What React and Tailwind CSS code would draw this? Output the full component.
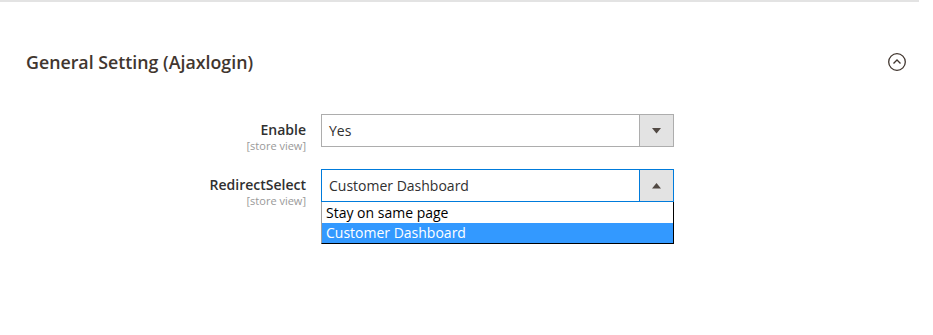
export default function App() {
  const font = { fontFamily: '"Open Sans", "Liberation Sans", sans-serif' };
  return (
    <div className="w-[933px] h-[335px] bg-white text-[#303030]" style={font}>
      <div className="w-[919px] h-[2px] bg-[#e3e3e3]" />
      <div className="flex items-center justify-between w-[919px] pl-[26px] pr-[12px] pt-[48px]">
        <h2 className="text-[17.8px] font-semibold text-[#41362f] leading-[24px]">General Setting (Ajaxlogin)</h2>
        <svg width="20" height="20" viewBox="0 0 20 20" className="mr-[0px]">
          <circle cx="10" cy="10" r="8.3" fill="none" stroke="#41362f" strokeWidth="1.3" />
          <path d="M6.5 11.5 L10 8 L13.5 11.5" fill="none" stroke="#41362f" strokeWidth="1.3" />
        </svg>
      </div>
      <div className="flex flex-col gap-[17px] mt-[40px]">
        <div className="flex">
          <div className="w-[306px] flex flex-col items-end pt-[7px]">
            <span className="text-[14px] font-semibold leading-[18px] text-[#303030]">Enable</span>
            <span className="text-[11px] leading-[13px] text-[#999999]">[store view]</span>
          </div>
          <div className="ml-[15px] w-[353px] h-[33px] flex border border-[#adadad]">
            <div className="flex-1 flex items-center pl-[7px] text-[14px]">Yes</div>
            <div className="w-[34px] bg-[#e3e3e3] border-l border-[#adadad] flex items-center justify-center">
              <svg width="9" height="6" viewBox="0 0 9 6"><path d="M0 0 H9 L4.5 5.5 Z" fill="#514943" /></svg>
            </div>
          </div>
        </div>
        <div className="flex">
          <div className="w-[306px] flex flex-col items-end pt-[7px]">
            <span className="text-[14px] font-semibold leading-[18px] text-[#303030]">RedirectSelect</span>
            <span className="text-[11px] leading-[13px] text-[#999999]">[store view]</span>
          </div>
          <div className="ml-[15px] w-[353px] relative">
            <div className="h-[33px] flex border border-[#007bdb]">
              <div className="flex-1 flex items-center pl-[7px] text-[14px]">Customer Dashboard</div>
              <div className="w-[34px] bg-[#e3e3e3] border-l border-[#007bdb] flex items-center justify-center">
                <svg width="9" height="6" viewBox="0 0 9 6"><path d="M0 5.5 H9 L4.5 0 Z" fill="#514943" /></svg>
              </div>
            </div>
            <div className="absolute left-0 top-[33px] w-[353px] pt-[1px] bg-white border-l border-l-[#a0a0a0] border-r border-r-black border-b border-b-black text-[14px] leading-[20px]">
              <div className="pl-[4px] h-[20px] text-black">Stay on same page</div>
              <div className="pl-[4px] h-[20px] bg-[#3399ff] text-white">Customer Dashboard</div>
            </div>
          </div>
        </div>
      </div>
    </div>
  );
}
